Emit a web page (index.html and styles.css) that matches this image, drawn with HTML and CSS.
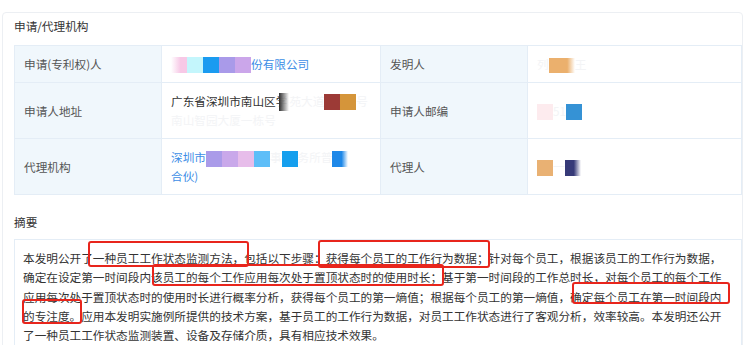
FILE: index.html
```html
<!DOCTYPE html>
<html lang="zh-CN">
<head>
<meta charset="utf-8">
<title>申请/代理机构</title>
<link rel="stylesheet" href="styles.css">
</head>
<body>
<div class="card">
  <div class="sec-title">申请/代理机构</div>
  <table class="info">
    <colgroup>
      <col class="c-label1"><col class="c-val1"><col class="c-label2"><col>
    </colgroup>
    <tr class="r1">
      <th>申请(专利权)人</th>
      <td class="link"><span class="m m-fade-l pink1"></span><span class="m cyan1"></span><span class="m blue1"></span><span class="m purple1"></span><span class="m lilac1"></span>份有限公司</td>
      <th>发明人</th>
      <td><span class="faint">列</span><span class="m m-wide orange1"></span><span class="faint">王</span></td>
    </tr>
    <tr class="r2">
      <th>申请人地址</th>
      <td>广东省深圳市南山区学<span class="m m-dark"></span><span class="faint">苑大道</span><span class="m red1"></span><span class="m orange2"></span><span class="faint">号</span><br><span class="faint">南山智园大厦一栋</span><span class="faint">号</span></td>
      <th>申请人邮编</th>
      <td><span class="m pinkf"></span><span class="faint">5</span><span class="faint">1</span><span class="m blue2"></span></td>
    </tr>
    <tr class="r3">
      <th>代理机构</th>
      <td class="link">深圳市<span class="m m-low purple2"></span><span class="m m-low lilac2"></span><span class="m m-low pink2"></span><span class="m m-low sky"></span><span class="faint">事</span><span class="m m-low blue3"></span><span class="faint">务所普</span><span class="m m-low m-fade-r blue4"></span><br>合伙)</td>
      <th>代理人</th>
      <td><span class="m m-low orange3"></span><span class="faint">一</span><span class="m m-low m-fade-r navy"></span></td>
    </tr>
  </table>

  <div class="sec-title sec-abs">摘要</div>
  <div class="abstract">
    <p>本发明公开了一种员工工作状态监测方法，包括以下步骤：获得每个员工的工作行为数据；针对每个员工，根据该员工的工作行为数据，确定在设定第一时间段内该员工的每个工作应用每次处于置顶状态时的使用时长；基于第一时间段的工作总时长，对每个员工的每个工作应用每次处于置顶状态时的使用时长进行概率分析，获得每个员工的第一熵值；根据每个员工的第一熵值，确定每个员工在第一时间段内的专注度。应用本发明实施例所提供的技术方案，基于员工的工作行为数据，对员工工作状态进行了客观分析，效率较高。本发明还公开了一种员工工作状态监测装置、设备及存储介质，具有相应技术效果。</p>
    <span class="mark mk1"></span>
    <span class="mark mk2"></span>
    <span class="mark mk3"></span>
    <span class="mark mk4"></span>
    <span class="mark mk5"></span>
  </div>
</div>
</body>
</html>
```

FILE: styles.css
```css
* { box-sizing: border-box; }
html, body { margin: 0; padding: 0; background: #fff; }
body {
  font-family: "Noto Sans CJK SC", "Microsoft YaHei", sans-serif;
  font-size: 11.65px;
  color: #333;
  overflow: hidden;
}
.card {
  margin: 12px 0 0 2px;
  width: 741px;
  height: 400px;
  border: 1px solid #eceff3;
  border-radius: 4px;
  padding: 0 0 0 11px;
}
.sec-title {
  padding: 3px 0 9px 0;
  line-height: 20px;
  color: #333;
}
.sec-abs { padding: 17px 0 7px 0; }

.info {
  width: 100%;
  border-collapse: collapse;
  table-layout: fixed;
}
.c-label1 { width: 147px; }
.c-val1 { width: 219px; }
.c-label2 { width: 147px; }
.info th, .info td {
  border: 1px solid #e4edf6;
  padding: 0 8px 0 9px;
  line-height: 18px;
  font-weight: normal;
  text-align: left;
  vertical-align: middle;
  white-space: nowrap;
  overflow: hidden;
}
.info th { background: #f0f7fc; color: #555; }
.info td { color: #333; }
.info td.link { color: #3d8ee6; }
.r1 { height: 37px; }
.r2, .r3 { height: 56px; }

.m {
  display: inline-block;
  width: 16px;
  height: 16px;
  vertical-align: -4px;
}
.m-low { vertical-align: -5px; }
.m-wide { width: 26px; }
.faint { color: #f3f4f6; }
.pink1 { background: linear-gradient(to right, #fff 0%, #f7c8e6 60%); }
.cyan1 { background: #c4f6fc; }
.blue1 { background: #1a9bf0; }
.purple1 { background: #a99ae9; }
.lilac1 { background: #cba6ea; }
.orange1 { background: linear-gradient(to right, #ebb06d 70%, #fff 100%); height: 15px; }
.m-dark { width: 10px; height: 18px; vertical-align: -5px; margin-left: -8px; background: linear-gradient(to right, #2e2e2e, rgba(255,255,255,0.9)); }
.red1 { background: #9c3a36; }
.orange2 { background: #d5953a; }
.pinkf { background: #fdebee; }
.blue2 { background: #3592d5; }
.purple2 { background: #aa9be9; }
.lilac2 { background: #c9a8ea; }
.pink2 { background: #e7bdea; }
.sky { background: #5ebef8; }
.blue3 { background: #159fee; }
.blue4 { background: linear-gradient(to right, #1e88e8 60%, #fff 100%); }
.orange3 { background: #e9b173; }
.navy { background: linear-gradient(to right, #363a78 55%, #fff 100%); }

.abstract {
  position: relative;
  border: 1px solid #e4edf6;
  padding: 8px 8px 8px 8px;
  height: 200px;
}
.abstract p {
  margin: 0;
  line-height: 19.3px;
  color: #333;
}
.mark {
  position: absolute;
  border: 2px solid #e8251c;
  border-radius: 3px;
}
.mk1 { left: 73px; top: 1px; width: 161px; height: 26px; }
.mk2 { left: 303px; top: 0; width: 172px; height: 28px; }
.mk3 { left: 137px; top: 24px; width: 292px; height: 22px; }
.mk4 { left: 557px; top: 42px; width: 158px; height: 22px; }
.mk5 { left: 7px; top: 59px; width: 60px; height: 25px; }
```
